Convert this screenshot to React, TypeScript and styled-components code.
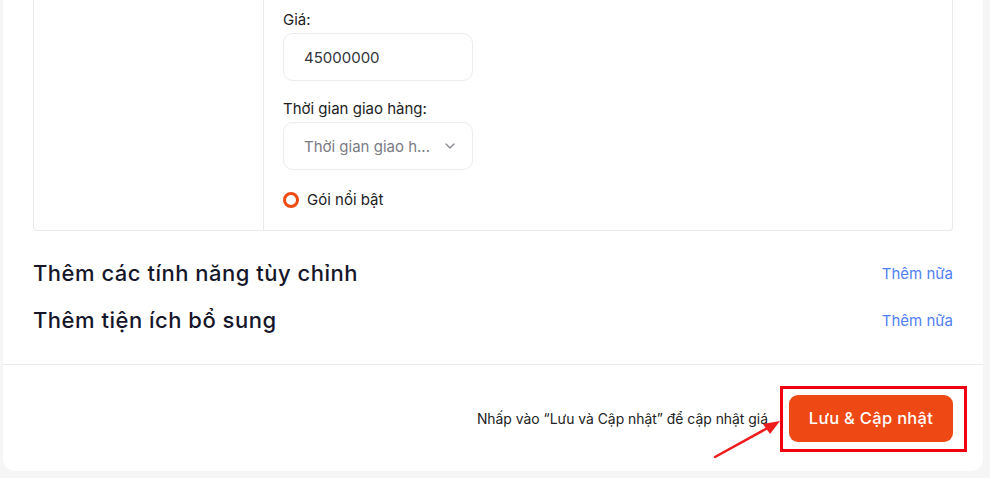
import styled, { createGlobalStyle } from 'styled-components';
import { ChevronDown } from 'lucide-react';

const GlobalStyle = createGlobalStyle`
  body {
    margin: 0;
    background: #f5f5f5;
    font-family: Inter, "Noto Sans", sans-serif;
    color: #1b1b22;
  }
`;

const Page = styled.div`
  width: 990px;
  height: 478px;
  overflow: hidden;
`;

const Card = styled.div`
  margin-left: 3px;
  width: 980px;
  background: #fff;
  border-radius: 0 0 12px 12px;
`;

const Body = styled.div`
  padding: 0 30px 26px;
`;

const PackageBox = styled.div`
  display: flex;
  height: 231px;
  box-sizing: border-box;
  border: 1px solid #ebebeb;
  border-top: none;
  border-radius: 0 0 4px 4px;
`;

const SideCol = styled.div`
  width: 229px;
  border-right: 1px solid #ebebeb;
`;

const FieldCol = styled.div`
  padding: 10px 0 0 19px;
  display: flex;
  flex-direction: column;
`;

const Label = styled.label<{ $top?: number }>`
  font-size: 15px;
  line-height: 20px;
  margin-top: ${(p) => p.$top ?? 0}px;
  margin-bottom: 3px;
  color: #1d1d24;
`;

const Field = styled.div<{ $muted?: boolean }>`
  width: 190px;
  height: 48px;
  box-sizing: border-box;
  display: flex;
  align-items: center;
  justify-content: space-between;
  padding: 0 14px 0 20px;
  border: 1px solid #ececec;
  border-radius: 10px;
  font-size: 15px;
  color: ${(p) => (p.$muted ? '#7b7b84' : '#33333b')};
  svg {
    color: #8a8a92;
  }
`;

const Featured = styled.div`
  display: flex;
  align-items: center;
  gap: 8px;
  margin-top: 20px;
  font-size: 15px;
  line-height: 20px;
`;

const Radio = styled.span`
  width: 16px;
  height: 16px;
  box-sizing: border-box;
  border: 3px solid #ee4b14;
  border-radius: 50%;
`;

const Sections = styled.div`
  display: flex;
  flex-direction: column;
  gap: 11px;
  margin-top: 24px;
`;

const SectionRow = styled.div`
  display: flex;
  align-items: center;
  justify-content: space-between;
  height: 36px;
`;

const SectionTitle = styled.h3`
  margin: 0;
  font-size: 22px;
  font-weight: 500;
  letter-spacing: 0.5px;
  color: #16162a;
`;

const MoreLink = styled.a`
  font-size: 15px;
  color: #5080f3;
  cursor: pointer;
`;

const Footer = styled.div`
  display: flex;
  align-items: center;
  justify-content: flex-end;
  gap: 21px;
  height: 106px;
  padding: 0 30px;
  border-top: 1px solid #ebebeb;
`;

const Hint = styled.span`
  font-size: 13.9px;
  color: #222;
  margin-top: 1px;
`;

const ButtonWrap = styled.div`
  position: relative;
`;

const SaveButton = styled.button`
  width: 164px;
  height: 47px;
  border: none;
  border-radius: 9px;
  background: #ee4814;
  color: #fff;
  font-family: Inter, sans-serif;
  font-size: 16.5px;
  font-weight: 500;
  letter-spacing: 0.3px;
  display: block;
`;

const Highlight = styled.div`
  position: absolute;
  left: -9px;
  top: -9px;
  right: -14px;
  bottom: -10px;
  border: 3px solid #f0000f;
  pointer-events: none;
`;

const Arrow = styled.svg`
  position: absolute;
  left: -78px;
  top: 22px;
  overflow: visible;
`;

const rows = ['Thêm các tính năng tùy chỉnh', 'Thêm tiện ích bổ sung'];

export default function App() {
  return (
    <Page>
      <GlobalStyle />
      <Card>
        <Body>
          <PackageBox>
            <SideCol />
            <FieldCol>
              <Label>Giá:</Label>
              <Field>45000000</Field>
              <Label $top={18}>Thời gian giao hàng:</Label>
              <Field $muted>
                Thời gian giao h...
                <ChevronDown size={16} strokeWidth={2} />
              </Field>
              <Featured>
                <Radio />
                Gói nổi bật
              </Featured>
            </FieldCol>
          </PackageBox>
          <Sections>
            {rows.map((r) => (
              <SectionRow key={r}>
                <SectionTitle>{r}</SectionTitle>
                <MoreLink>Thêm nữa</MoreLink>
              </SectionRow>
            ))}
          </Sections>
        </Body>
        <Footer>
          <Hint>Nhấp vào “Lưu và Cập nhật” để cập nhật giá</Hint>
          <ButtonWrap>
            <SaveButton>Lưu &amp; Cập nhật</SaveButton>
            <Highlight />
            <Arrow width="70" height="40" viewBox="0 0 70 40">
              <line x1="4" y1="40" x2="62" y2="8" stroke="#ee1c1c" strokeWidth="2.5" strokeLinecap="round" />
              <polygon points="69,4 52,7 59,17" fill="#ee1c1c" />
            </Arrow>
          </ButtonWrap>
        </Footer>
      </Card>
    </Page>
  );
}
